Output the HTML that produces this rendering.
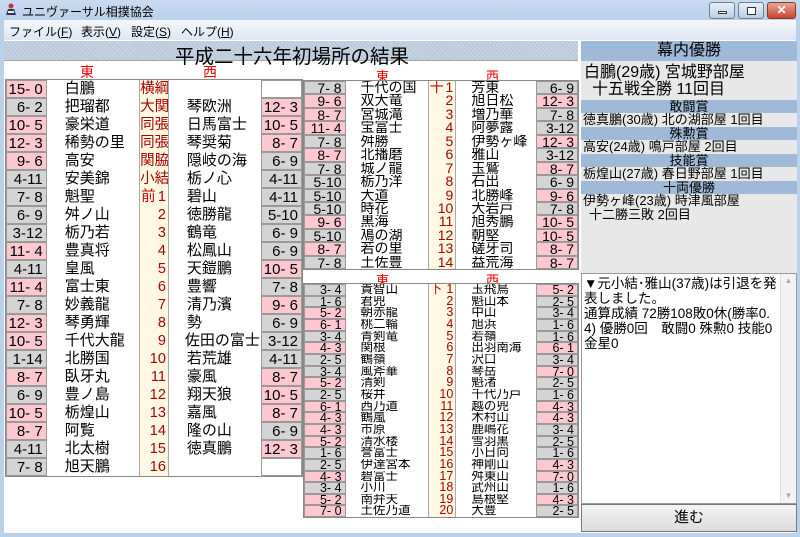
<!DOCTYPE html>
<html><head><meta charset="utf-8">
<style>
*{box-sizing:border-box;margin:0;padding:0}
body{width:800px;height:537px;overflow:hidden;background:#b9d1ea;font-family:"Liberation Sans","Noto Sans CJK JP",sans-serif;position:relative;color:#000}
.tb{position:absolute;left:0;top:0;width:800px;height:20px;background:linear-gradient(#c9dbef,#b9d1ea)}
.tb .t{position:absolute;left:22px;top:3px;font-size:12px}
.ic{position:absolute;left:5px;top:3px;width:12px;height:13px}
.btn{position:absolute;top:2px;height:17px;border:1px solid #6d7f99;border-radius:3px;background:linear-gradient(#e8f0f8,#bccde3)}
.mb{position:absolute;left:4px;top:20px;width:792px;height:20px;background:linear-gradient(#f4f7fc,#dfe7f3);font-size:12px}
.mb span{position:absolute;top:3px}
.ct{position:absolute;left:4px;top:40px;width:792px;height:493px;background:#fff}
.ttl{position:absolute;left:4px;top:41px;width:574px;height:20px;background:repeating-linear-gradient(45deg,#b4c4d6 0 1px,#c6d3e2 1px 3px);border-bottom:1px solid #9aa;}
.ttl span{position:absolute;left:171px;top:-1px;font-size:19.5px;letter-spacing:0}
.lbl{position:absolute;color:#f00;font-size:14px}
.tbl{position:absolute;border:1px solid #888;background:#fff}
.r{display:flex;white-space:pre}
.r span{display:block;overflow:hidden}
.a{border:1px solid #999;text-align:right;padding-right:3px}
.p{background:#ffc7d0}.g{background:#d4d4d4}.w{background:#fff}
.k{background:#fff9e4;color:#a00;border-left:1px solid #aaa;border-right:1px solid #aaa;text-align:right;padding-right:2px;position:relative}
.k i{font-style:normal;position:absolute;left:1px;color:#c00}
#L{left:5px;top:79px;width:298px}
#L .r{height:18px;line-height:18px;font-size:15px}
#L .a{width:41px}#L .n{width:93px;padding-left:18px}#L .k{width:30px;font-size:14.5px}
#M{left:303px;top:80px;width:276px}
#M .r{height:13.45px;line-height:13.45px;font-size:14px}
#M .a{width:42px}#M .n{width:83px;padding-left:15px}#M .k{width:29px}#M .n2{width:81px;padding-left:15px}
#B{left:303px;top:283px;width:276px}
#B .r{height:11.67px;line-height:11.67px;font-size:12.5px}
#B .a{width:42px}#B .n{width:83px;padding-left:15px}#B .k{width:29px}#B .n2{width:81px;padding-left:15px}
.rp{position:absolute;left:581px;top:41px;width:216px;height:232px;background:#e8e8e8}
.band{background:#9fbad9;text-align:center}
.rp div{white-space:nowrap}
.box{position:absolute;left:581px;top:273px;width:216px;height:231px;background:#fff;border:1px solid #999;font-size:13.5px;line-height:15px;padding:2px 18px 0 2px;word-break:break-all}
.sb{position:absolute;right:0;top:0;width:16px;height:100%;background:#f3f3f3;border-left:1px solid #e0e0e0}
.go{position:absolute;left:581px;top:504px;width:216px;height:28px;border:1px solid #777;background:linear-gradient(#f4f4f4,#dcdcdc);text-align:center;font-size:15px;line-height:26px}
</style></head><body>
<div class="tb">
<svg class="ic" viewBox="0 0 12 13"><circle cx="6" cy="3" r="2.5" fill="#c33"/><path d="M1 12 L3 6 H9 L11 12 Z" fill="#335"/><rect x="3" y="8" width="6" height="2" fill="#eee"/></svg>
<span class="t">ユニヴァーサル相撲協会</span>
<div class="btn" style="left:709px;width:26px"><div style="position:absolute;left:8px;top:8px;width:9px;height:3px;background:#fff;border:1px solid #333"></div></div>
<div class="btn" style="left:738px;width:26px"><div style="position:absolute;left:8px;top:4px;width:9px;height:8px;border:1px solid #333;background:#fff"></div></div>
<div class="btn" style="left:767px;width:29px;background:linear-gradient(#e9a493,#c8462f);border-color:#8a3525;color:#fff;font-size:12px;font-weight:bold;text-align:center;line-height:15px">✕</div>
</div>
<div class="mb"><span style="left:5px">ファイル(<u>F</u>)</span><span style="left:77px">表示(<u>V</u>)</span><span style="left:127px">設定(<u>S</u>)</span><span style="left:177px">ヘルプ(<u>H</u>)</span></div>
<div class="ct"></div>
<div class="ttl"><span>平成二十六年初場所の結果</span></div>
<div class="lbl" style="left:80px;top:62px">東</div><div class="lbl" style="left:203px;top:62px">西</div>
<div class="lbl" style="left:376px;top:66px;font-size:13px">東</div><div class="lbl" style="left:486px;top:66px;font-size:13px">西</div>
<div class="lbl" style="left:376px;top:270px;font-size:13px">東</div><div class="lbl" style="left:486px;top:270px;font-size:13px">西</div>

<div class="tbl" id="L">
<div class="r"><span class="a p">15- 0</span><span class="n">白鵬</span><span class="k" style="text-align:center;padding:0">横綱</span><span class="n"></span><span class="a w"></span></div>
<div class="r"><span class="a g">6- 2</span><span class="n">把瑠都</span><span class="k" style="text-align:center;padding:0">大関</span><span class="n">琴欧洲</span><span class="a p">12- 3</span></div>
<div class="r"><span class="a p">10- 5</span><span class="n">豪栄道</span><span class="k" style="text-align:center;padding:0">同張</span><span class="n">日馬富士</span><span class="a p">10- 5</span></div>
<div class="r"><span class="a p">12- 3</span><span class="n">稀勢の里</span><span class="k" style="text-align:center;padding:0">同張</span><span class="n">琴奨菊</span><span class="a p">8- 7</span></div>
<div class="r"><span class="a p">9- 6</span><span class="n">高安</span><span class="k" style="text-align:center;padding:0">関脇</span><span class="n">隠岐の海</span><span class="a g">6- 9</span></div>
<div class="r"><span class="a g">4-11</span><span class="n">安美錦</span><span class="k" style="text-align:center;padding:0">小結</span><span class="n">栃ノ心</span><span class="a g">4-11</span></div>
<div class="r"><span class="a g">7- 8</span><span class="n">魁聖</span><span class="k"><i>前</i>1</span><span class="n">碧山</span><span class="a g">4-11</span></div>
<div class="r"><span class="a g">6- 9</span><span class="n">舛ノ山</span><span class="k">2</span><span class="n">徳勝龍</span><span class="a g">5-10</span></div>
<div class="r"><span class="a g">3-12</span><span class="n">栃乃若</span><span class="k">3</span><span class="n">鶴竜</span><span class="a g">6- 9</span></div>
<div class="r"><span class="a p">11- 4</span><span class="n">豊真将</span><span class="k">4</span><span class="n">松鳳山</span><span class="a g">6- 9</span></div>
<div class="r"><span class="a g">4-11</span><span class="n">皇風</span><span class="k">5</span><span class="n">天鎧鵬</span><span class="a p">10- 5</span></div>
<div class="r"><span class="a p">11- 4</span><span class="n">富士東</span><span class="k">6</span><span class="n">豊響</span><span class="a g">7- 8</span></div>
<div class="r"><span class="a g">7- 8</span><span class="n">妙義龍</span><span class="k">7</span><span class="n">清乃濱</span><span class="a p">9- 6</span></div>
<div class="r"><span class="a p">12- 3</span><span class="n">琴勇輝</span><span class="k">8</span><span class="n">勢</span><span class="a g">6- 9</span></div>
<div class="r"><span class="a p">10- 5</span><span class="n">千代大龍</span><span class="k">9</span><span class="n" style="padding-left:16px">佐田の富士</span><span class="a g">3-12</span></div>
<div class="r"><span class="a g">1-14</span><span class="n">北勝国</span><span class="k">10</span><span class="n">若荒雄</span><span class="a g">4-11</span></div>
<div class="r"><span class="a p">8- 7</span><span class="n">臥牙丸</span><span class="k">11</span><span class="n">豪風</span><span class="a p">8- 7</span></div>
<div class="r"><span class="a g">6- 9</span><span class="n">豊ノ島</span><span class="k">12</span><span class="n">翔天狼</span><span class="a p">10- 5</span></div>
<div class="r"><span class="a p">10- 5</span><span class="n">栃煌山</span><span class="k">13</span><span class="n">嘉風</span><span class="a p">8- 7</span></div>
<div class="r"><span class="a p">8- 7</span><span class="n">阿覧</span><span class="k">14</span><span class="n">隆の山</span><span class="a g">6- 9</span></div>
<div class="r"><span class="a g">4-11</span><span class="n">北太樹</span><span class="k">15</span><span class="n">徳真鵬</span><span class="a p">12- 3</span></div>
<div class="r"><span class="a g">7- 8</span><span class="n">旭天鵬</span><span class="k">16</span><span class="n"></span><span class="a w"></span></div>
</div>

<div class="tbl" id="M">
<div class="r"><span class="a g">7- 8</span><span class="n">千代の国</span><span class="k"><i>十</i>1</span><span class="n2">芳東</span><span class="a g">6- 9</span></div>
<div class="r"><span class="a p">9- 6</span><span class="n">双大竜</span><span class="k">2</span><span class="n2">旭日松</span><span class="a p">12- 3</span></div>
<div class="r"><span class="a p">8- 7</span><span class="n">宮城滝</span><span class="k">3</span><span class="n2">増乃華</span><span class="a g">7- 8</span></div>
<div class="r"><span class="a p">11- 4</span><span class="n">宝富士</span><span class="k">4</span><span class="n2">阿夢露</span><span class="a g">3-12</span></div>
<div class="r"><span class="a g">7- 8</span><span class="n">舛勝</span><span class="k">5</span><span class="n2">伊勢ヶ峰</span><span class="a p">12- 3</span></div>
<div class="r"><span class="a p">8- 7</span><span class="n">北播磨</span><span class="k">6</span><span class="n2">雅山</span><span class="a g">3-12</span></div>
<div class="r"><span class="a g">7- 8</span><span class="n">城ノ龍</span><span class="k">7</span><span class="n2">玉鷲</span><span class="a p">8- 7</span></div>
<div class="r"><span class="a g">5-10</span><span class="n">栃乃洋</span><span class="k">8</span><span class="n2">石出</span><span class="a g">6- 9</span></div>
<div class="r"><span class="a g">5-10</span><span class="n">大道</span><span class="k">9</span><span class="n2">北勝峰</span><span class="a p">9- 6</span></div>
<div class="r"><span class="a g">5-10</span><span class="n">時花</span><span class="k">10</span><span class="n2">大岩戸</span><span class="a g">7- 8</span></div>
<div class="r"><span class="a p">9- 6</span><span class="n">黒海</span><span class="k">11</span><span class="n2">旭秀鵬</span><span class="a p">10- 5</span></div>
<div class="r"><span class="a g">5-10</span><span class="n">鳰の湖</span><span class="k">12</span><span class="n2">朝堅</span><span class="a p">10- 5</span></div>
<div class="r"><span class="a p">8- 7</span><span class="n">若の里</span><span class="k">13</span><span class="n2">磋牙司</span><span class="a p">8- 7</span></div>
<div class="r"><span class="a g">7- 8</span><span class="n">土佐豊</span><span class="k">14</span><span class="n2">益荒海</span><span class="a p">8- 7</span></div>
</div>

<div class="tbl" id="B">
<div class="r"><span class="a g">3- 4</span><span class="n">貴智山</span><span class="k"><i>下</i>1</span><span class="n2">玉飛鳥</span><span class="a p">5- 2</span></div>
<div class="r"><span class="a g">1- 6</span><span class="n">君兜</span><span class="k">2</span><span class="n2">魁山本</span><span class="a g">2- 5</span></div>
<div class="r"><span class="a p">5- 2</span><span class="n">朝赤龍</span><span class="k">3</span><span class="n2">中山</span><span class="a g">3- 4</span></div>
<div class="r"><span class="a p">6- 1</span><span class="n">桃二輪</span><span class="k">4</span><span class="n2">旭浜</span><span class="a g">1- 6</span></div>
<div class="r"><span class="a g">3- 4</span><span class="n">青剣竜</span><span class="k">5</span><span class="n2">若嶺</span><span class="a g">1- 6</span></div>
<div class="r"><span class="a p">4- 3</span><span class="n">関根</span><span class="k">6</span><span class="n2">出羽南海</span><span class="a p">6- 1</span></div>
<div class="r"><span class="a g">2- 5</span><span class="n">鶴嶺</span><span class="k">7</span><span class="n2">沢口</span><span class="a g">3- 4</span></div>
<div class="r"><span class="a g">3- 4</span><span class="n">風斧華</span><span class="k">8</span><span class="n2">琴岳</span><span class="a p">7- 0</span></div>
<div class="r"><span class="a p">5- 2</span><span class="n">清剣</span><span class="k">9</span><span class="n2">魁渚</span><span class="a g">2- 5</span></div>
<div class="r"><span class="a g">2- 5</span><span class="n">桜井</span><span class="k">10</span><span class="n2">千代乃戸</span><span class="a g">1- 6</span></div>
<div class="r"><span class="a p">6- 1</span><span class="n">西乃道</span><span class="k">11</span><span class="n2">越の兜</span><span class="a p">4- 3</span></div>
<div class="r"><span class="a p">4- 3</span><span class="n">鶴嵐</span><span class="k">12</span><span class="n2">木村山</span><span class="a p">4- 3</span></div>
<div class="r"><span class="a p">4- 3</span><span class="n">市原</span><span class="k">13</span><span class="n2">鹿嶋花</span><span class="a g">3- 4</span></div>
<div class="r"><span class="a p">5- 2</span><span class="n">清水楼</span><span class="k">14</span><span class="n2">雪羽黒</span><span class="a g">2- 5</span></div>
<div class="r"><span class="a g">1- 6</span><span class="n">誉富士</span><span class="k">15</span><span class="n2">小日向</span><span class="a g">1- 6</span></div>
<div class="r"><span class="a g">2- 5</span><span class="n">伊達宮本</span><span class="k">16</span><span class="n2">神剛山</span><span class="a p">4- 3</span></div>
<div class="r"><span class="a p">4- 3</span><span class="n">碧富士</span><span class="k">17</span><span class="n2">舛東山</span><span class="a p">7- 0</span></div>
<div class="r"><span class="a g">3- 4</span><span class="n">小川</span><span class="k">18</span><span class="n2">武州山</span><span class="a g">1- 6</span></div>
<div class="r"><span class="a p">5- 2</span><span class="n">南弁天</span><span class="k">19</span><span class="n2">島根堅</span><span class="a p">4- 3</span></div>
<div class="r"><span class="a p">7- 0</span><span class="n">土佐乃道</span><span class="k">20</span><span class="n2">大豊</span><span class="a g">2- 5</span></div>
</div>

<div class="rp">
<div class="band" style="height:20px;font-size:16px;line-height:20px">幕内優勝</div>
<div style="font-size:16px;line-height:17px;padding:3px 0 0 3px">白鵬(29歳) 宮城野部屋</div>
<div style="font-size:16px;line-height:17px;padding-left:11px">十五戦全勝 11回目</div>
<div class="band" style="margin-top:2px;height:13px;font-size:13px;line-height:13px">敢闘賞</div>
<div style="font-size:13px;line-height:14px;padding-left:2px">徳真鵬(30歳) 北の湖部屋 1回目</div>
<div class="band" style="height:13px;font-size:13px;line-height:13px">殊勲賞</div>
<div style="font-size:13px;line-height:14px;padding-left:2px">高安(24歳) 鳴戸部屋 2回目</div>
<div class="band" style="height:13px;font-size:13px;line-height:13px">技能賞</div>
<div style="font-size:13px;line-height:14px;padding-left:2px">栃煌山(27歳) 春日野部屋 1回目</div>
<div class="band" style="height:13px;font-size:13px;line-height:13px">十両優勝</div>
<div style="font-size:13px;line-height:14px;padding-left:2px">伊勢ヶ峰(23歳) 時津風部屋</div>
<div style="font-size:13px;line-height:14px;padding-left:8px">十二勝三敗 2回目</div>
</div>
<div class="box">▼元小結･雅山(37歳)は引退を発表しました。<br>通算成績 72勝108敗0休(勝率0.4)&nbsp;優勝0回　敢闘0 殊勲0 技能0 金星0<div class="sb"><div style="font-size:8px;color:#aaa;text-align:center;line-height:14px">▲</div><div style="position:absolute;bottom:0;width:100%;font-size:8px;color:#aaa;text-align:center;line-height:14px">▼</div></div></div>
<div class="go">進む</div>
</body></html>
